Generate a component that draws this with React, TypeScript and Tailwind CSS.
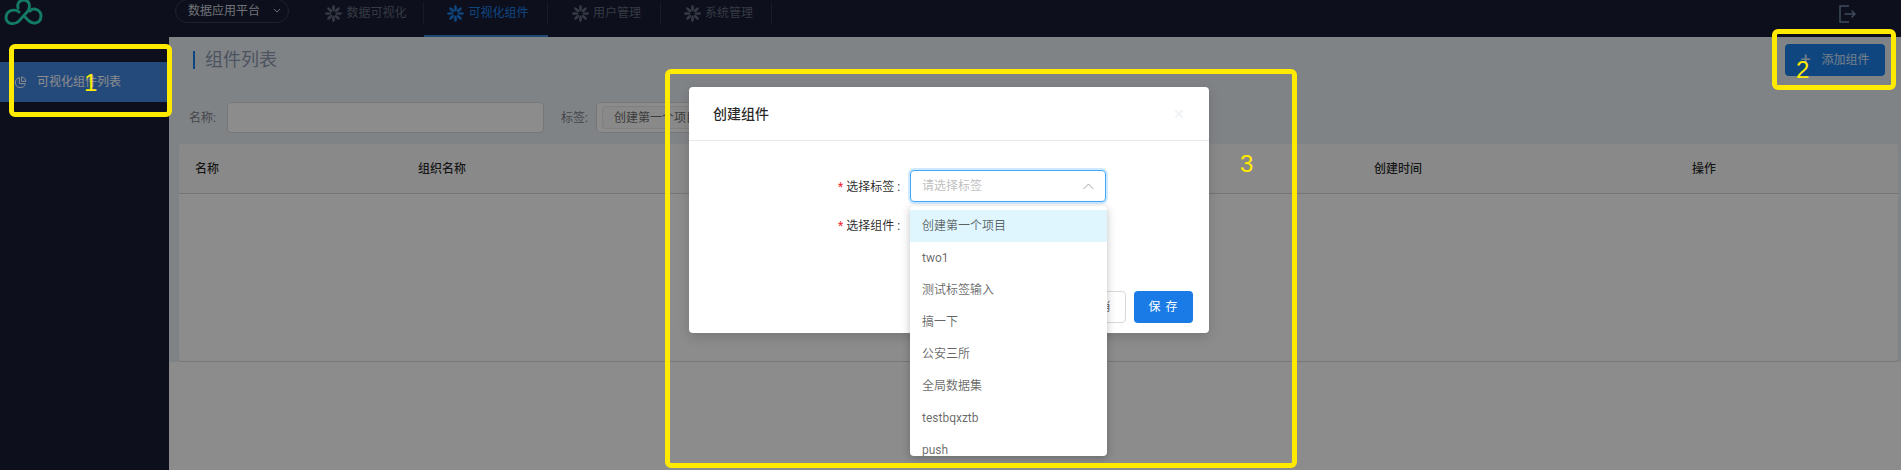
const font = "font-['Roboto','Noto_Sans_CJK_SC',sans-serif]"

const navItems = [
    { label: "数据可视化", width: "w-[120px]", active: false },
    { label: "可视化组件", width: "w-[124px]", active: true },
    { label: "用户管理", width: "w-[113px]", active: false },
    { label: "系统管理", width: "w-[111px]", active: false },
]

const tagOptions = ["创建第一个项目", "two1", "测试标签输入", "搞一下", "公安三所", "全局数据集", "testbqxztb", "push"]

function Flower({ color }: { color: string }) {
    return (
        <svg width="17" height="17" viewBox="0 0 18 18" fill={color} className="shrink-0">
            {[0, 45, 90, 135, 180, 225, 270, 315].map(angle => (
                <ellipse key={angle} cx="9" cy="3.4" rx="1.45" ry="3.4" transform={`rotate(${angle} 9 9)`} />
            ))}
        </svg>
    )
}

function Logo() {
    return (
        <svg width="40" height="26" viewBox="0 0 40 26" fill="none" stroke="#26debd" strokeWidth="2.9" strokeLinecap="round" className="absolute left-[3px] top-0">
            <path d="M16 12 C13 9 4 9 3 17 C3 25 12 25 16 21 L25 11 C28 6 26 0 21 0 C16 0 14 4 15 8" />
            <path d="M27 11 C31 7 38 10 38 16 C38 23 31 25 26 21 L22 17" />
        </svg>
    )
}

function Annotation({ className, number, numberClass }: { className: string; number: string; numberClass: string }) {
    return (
        <>
            <div className={`absolute border-[5px] border-[#ffea00] rounded-[6px] ${className}`} />
            <span className={`absolute text-[#ffea00] text-[24px] leading-none font-['Liberation_Sans',sans-serif] ${numberClass}`}>{number}</span>
        </>
    )
}

export default function App() {
    return (
        <div className={`relative h-screen w-full overflow-hidden bg-white flex flex-col ${font}`}>
            {/* top nav */}
            <header className="relative h-[37px] shrink-0 bg-[#181d33] flex items-start pl-[175px]">
                <Logo />
                <div className="h-6 w-[114px] -mt-px border border-[#363f5a] rounded-full flex items-center pl-3 gap-[13px] text-xs text-[#c9cfd9]">
                    <span>数据应用平台</span>
                    <svg width="8" height="6" viewBox="0 0 8 6" fill="none" stroke="#c9cfd9" strokeWidth="1"><path d="M1 1l3 3 3-3" /></svg>
                </div>
                <nav className="flex ml-[15px]">
                    {navItems.map(item => (
                        <div
                            key={item.label}
                            className={`${item.width} h-[37px] flex justify-center pt-[2px] ${item.active ? "relative" : ""}`}
                        >
                            <div className={`flex-1 h-[22px] flex items-center justify-center gap-[4px] pl-[5px] text-xs border-r border-[#2a3047] ${item.active ? "text-[#1c80e9]" : "text-[#626a7d]"}`}>
                                <Flower color={item.active ? "#1c80e9" : "#626a7d"} />
                                <span>{item.label}</span>
                            </div>
                            {item.active && <div className="absolute left-0 right-0 bottom-0 h-[2px] bg-[#3a83d6]" />}
                        </div>
                    ))}
                </nav>
                <svg width="18" height="18" viewBox="0 0 18 18" fill="none" stroke="#6f88ab" strokeWidth="1.5" className="absolute left-[1838px] top-[5px]">
                    <path d="M11 1H2v16h9" />
                    <path d="M6.5 9H17M13.5 5.5L17 9l-3.5 3.5" />
                </svg>
            </header>

            <div className="flex flex-1 min-h-0">
                {/* sidebar */}
                <aside className="w-[169px] shrink-0 bg-[#181d33] pt-[25px]">
                    <div className="h-10 bg-[#4287e2] flex items-center pl-[14px] gap-[10px] text-xs text-white">
                        <svg width="13" height="13" viewBox="0 0 12 12" fill="none" stroke="white" strokeWidth="0.9">
                            <path d="M5 1.6a4.6 4.6 0 1 0 5.4 5.4H5V1.6z" />
                            <path d="M7 .8A4.6 4.6 0 0 1 11 5H7V.8z" />
                        </svg>
                        <span>可视化组件列表</span>
                    </div>
                </aside>

                <main className="flex-1 min-w-0">
                    <section className="h-[325px] bg-[#e9eff5] pl-[10px] pr-[3px] flex flex-col">
                        <div className="flex items-start justify-between pt-[14px] pl-[14px] pr-[13px] h-[65px]">
                            <h1 className="border-l-2 border-[#1c80e9] pl-[10px] h-[18px] leading-[17px] text-[18px] text-[#8d97ad]">组件列表</h1>
                            <button className="-mt-[7px] w-[100px] h-8 rounded bg-[#1c80e9] flex items-center justify-center gap-[11px] text-xs text-white/80">
                                <span className="text-lg leading-none">+</span>
                                添加组件
                            </button>
                        </div>

                        <div className="flex items-center h-[31px] pl-[10px] text-xs text-[#7c8088]">
                            <span className="w-[38px]">名称:</span>
                            <div className="w-[317px] h-full bg-white border border-[#d9d9d9] rounded" />
                            <span className="ml-[17px] w-[35px]">标签:</span>
                            <div className="w-[220px] h-full bg-white border border-[#d9d9d9] rounded flex items-center px-[5px]">
                                <span className="h-[23px] w-[180px] bg-[#fafafa] border border-[#e8e8e8] rounded-sm flex items-center pl-[11px] text-[#6f6f6f]">创建第一个项目</span>
                            </div>
                        </div>

                        <div className="mt-[11px] flex-1 bg-white rounded border-b border-[#d9d9d9]">
                            <div className="h-[50px] bg-[#fafafa] rounded-t border-b border-[#d4d4d4] grid grid-cols-[223px_956px_318px_1fr] items-center pl-4 text-xs font-medium text-[rgba(0,0,0,0.85)]">
                                <span>名称</span>
                                <span>组织名称</span>
                                <span>创建时间</span>
                                <span>操作</span>
                            </div>
                        </div>
                    </section>
                </main>
            </div>

            {/* modal mask */}
            <div className="absolute inset-0 bg-black/45">
                <div className="absolute left-[689px] top-[87px] w-[520px] h-[246px] bg-white rounded shadow-[0_4px_12px_rgba(0,0,0,0.15)] flex flex-col">
                    <div className="h-[54px] shrink-0 border-b border-[#e8e8e8] flex items-center justify-between pl-6 pr-[24px]">
                        <span className="text-sm font-medium text-[rgba(0,0,0,0.85)]">创建组件</span>
                        <span className="text-[#eef1f5] text-sm leading-none">✕</span>
                    </div>
                    <div className="flex-1 pt-[29px]">
                        <div className="flex items-center h-8 ml-[149px]">
                            <span className="w-[72px] mt-[2px] text-xs text-[rgba(0,0,0,0.85)] whitespace-nowrap"><span className="text-[#f5222d]">* </span>选择标签 :</span>
                            <div className="relative w-[196px] h-8 border border-[#40a9ff] rounded shadow-[0_0_0_2px_rgba(24,144,255,0.2)] flex items-center justify-between pl-[11px] pr-[11px] text-xs text-[#bfbfbf]">
                                <span>请选择标签</span>
                                <svg width="11" height="7" viewBox="0 0 11 7" fill="none" stroke="#a6a6a6" strokeWidth="1"><path d="M.7 6L5.5 1l4.8 5" /></svg>
                            </div>
                        </div>
                        <div className="flex items-center h-8 ml-[149px] mt-[7px]">
                            <span className="w-[72px] mt-[2px] text-xs text-[rgba(0,0,0,0.85)] whitespace-nowrap"><span className="text-[#f5222d]">* </span>选择组件 :</span>
                        </div>
                    </div>
                    <div className="flex justify-end gap-2 pr-4 pb-[10px]">
                        <button className="w-[59px] h-8 border border-[#d9d9d9] rounded text-xs tracking-[1px] text-[rgba(0,0,0,0.65)]">取 消</button>
                        <button className="w-[59px] h-8 rounded bg-[#1a7be6] text-xs tracking-[1px] text-white">保 存</button>
                    </div>
                </div>

                {/* open dropdown */}
                <div className="absolute left-[910px] top-[206px] w-[197px] h-[250px] overflow-hidden bg-white rounded shadow-[0_2px_8px_rgba(0,0,0,0.25)] pt-1">
                    {tagOptions.map((option, i) => (
                        <div
                            key={option}
                            className={`h-8 shrink-0 flex items-center pl-3 text-xs text-[rgba(0,0,0,0.6)] ${i === 0 ? "bg-[#e0f6fe]" : ""}`}
                        >
                            {option}
                        </div>
                    ))}
                </div>
            </div>

            {/* yellow annotations */}
            <Annotation className="left-[9px] top-[44px] w-[163px] h-[73px]" number="1" numberClass="left-[84px] top-[71px]" />
            <Annotation className="left-[1772px] top-[29px] w-[124px] h-[61px]" number="2" numberClass="left-[1796px] top-[58px]" />
            <Annotation className="left-[665px] top-[69px] w-[632px] h-[399px]" number="3" numberClass="left-[1240px] top-[152px]" />
        </div>
    )
}
